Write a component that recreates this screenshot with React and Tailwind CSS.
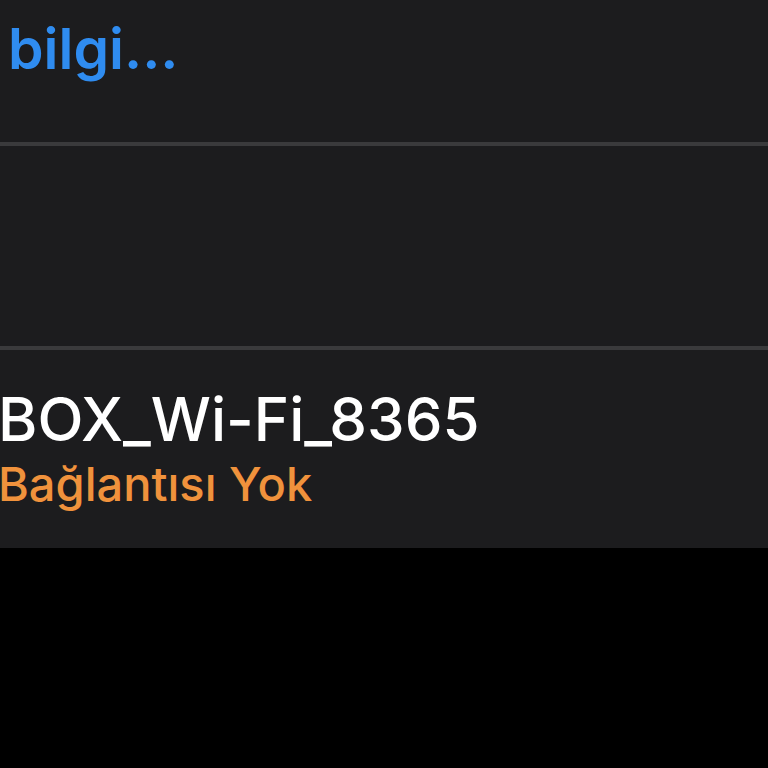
import React from 'react';

const App = () => {
  return (
    <div className="w-[768px] h-[768px] bg-black overflow-hidden" style={{ fontFamily: 'Inter, "Noto Sans", sans-serif' }}>
      <div className="bg-[#1c1c1e]">
        <div className="h-[142px] pl-[8px] pt-[13px]">
          <span className="text-[#2f8cf0] text-[57px] font-semibold leading-[72px]">bilgi...</span>
        </div>
        <div className="h-[4px] bg-[#3a3a3c]"></div>
        <div className="h-[200px]"></div>
        <div className="h-[4px] bg-[#3a3a3c]"></div>
        <div className="h-[198px] pt-[37px] flex flex-col">
          <span className="text-white text-[60px] font-medium leading-[64px] -ml-[2px] whitespace-nowrap">BOX_Wi-Fi_8365</span>
          <span className="text-[#f0923c] text-[47px] font-medium leading-[56px] mt-[5px] -ml-[2px] whitespace-nowrap">Bağlantısı Yok</span>
        </div>
      </div>
    </div>
  );
};

export default App;
